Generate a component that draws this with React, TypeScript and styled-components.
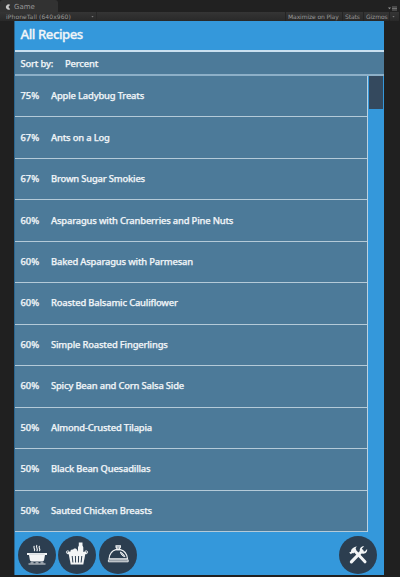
import React from "react";
import styled, { createGlobalStyle } from "styled-components";

const GlobalStyle = createGlobalStyle`
  * { box-sizing: border-box; }
  html, body { margin: 0; padding: 0; background: #202020; }
`;

const EditorWindow = styled.div`
  width: 400px;
  height: 577px;
  display: flex;
  flex-direction: column;
  overflow: hidden;
  background: #202020;
  font-family: "Noto Sans", "Open Sans", sans-serif;
`;

const TabStrip = styled.div`
  height: 12px;
  flex: none;
  display: flex;
  justify-content: space-between;
  align-items: flex-end;
  background: #212121;
`;

const Tab = styled.div`
  width: 58px;
  height: 12px;
  display: flex;
  align-items: center;
  gap: 3px;
  padding: 1px 0 0 5px;
  border-radius: 3px 3px 0 0;
  background: #323232;
  color: #969696;
  font: 7px/10px "DejaVu Sans", sans-serif;
`;

const PaneMenu = styled.svg`
  width: 10px;
  height: 5px;
  margin-right: 2px;
  margin-bottom: 1px;
`;

const Toolbar = styled.div`
  height: 9px;
  flex: none;
  display: flex;
  justify-content: space-between;
  margin-right: 1px;
  background: linear-gradient(#353535, #292929);
  color: #9a9a9a;
  font: 6px/8px "DejaVu Sans", sans-serif;
  white-space: nowrap;
`;

const AspectSelect = styled.div`
  width: 97px;
  display: flex;
  justify-content: space-between;
  align-items: center;
  padding: 0 2px 0 6px;
  border-right: 1px solid #282828;
  letter-spacing: 0.1px;
`;

const ToolbarActions = styled.div`
  display: flex;
`;

const ToolbarButton = styled.div<{ $width: number }>`
  width: ${(p) => p.$width}px;
  display: flex;
  align-items: center;
  padding-left: 2px;
  border-left: 1px solid #242424;
  letter-spacing: -0.1px;
`;

const Caret = styled.span`
  width: 3px;
  height: 2px;
  background: #7b7b7b;
  clip-path: polygon(0 0, 100% 0, 50% 100%);
`;

const GameView = styled.div`
  width: 370px;
  height: 554px;
  margin-left: 14px;
  flex: none;
  display: flex;
  flex-direction: column;
  border-left: 1px solid #2c668f;
  background: #3498db;
  color: #f1f5f8;
`;

const Header = styled.header`
  height: 31px;
  flex: none;
  padding: 3px 0 0 5.5px;
  border-bottom: 2px solid #c9e0f0;
  font-size: 13.2px;
  line-height: 20px;
  font-weight: 500;
  letter-spacing: -0.45px;
  -webkit-text-stroke: 0.3px #f1f5f8;
`;

const SortBar = styled.div`
  height: 24px;
  flex: none;
  display: flex;
  align-items: center;
  padding-left: 5.5px;
  border-bottom: 2px solid #8db0c8;
  background: #4c7a99;
  font-size: 9.4px;
  font-weight: 500;
  letter-spacing: -0.18px;
  -webkit-text-stroke: 0.25px #f1f5f8;
`;

const SortLabel = styled.span`
  width: 44.5px;
`;

const ListArea = styled.div`
  height: 456px;
  flex: none;
  display: flex;
`;

const RecipeList = styled.ul`
  width: 353px;
  margin: 0;
  padding: 0;
  display: grid;
  grid-auto-rows: 1fr;
  list-style: none;
  border-right: 1px solid #b9d2e3;
  background: #4c7a99;
`;

const RecipeRow = styled.li`
  display: flex;
  align-items: center;
  padding: 0 0 1px 5.5px;
  border-bottom: 1px solid #b4cad8;
  font-size: 9.4px;
  font-weight: 500;
  letter-spacing: -0.18px;
  white-space: nowrap;
  -webkit-text-stroke: 0.25px #f1f5f8;
`;

const Percent = styled.span`
  width: 30.5px;
  letter-spacing: 0;
`;

const ScrollTrack = styled.div`
  flex: 1;
  padding-left: 1px;
  padding-right: 1px;
`;

const ScrollThumb = styled.div`
  height: 33px;
  background: #34495e;
`;

const BottomBar = styled.nav`
  flex: 1;
  display: flex;
  align-items: center;
  gap: 2.3px;
  padding: 3px 7px 0 3px;
`;

const RoundButton = styled.button<{ $end?: boolean }>`
  width: 38px;
  height: 38px;
  flex: none;
  display: grid;
  place-items: center;
  margin-left: ${(p) => (p.$end ? "auto" : "0")};
  padding: 0;
  border: 0;
  border-radius: 50%;
  background: #2c3e50;
`;

const Glyph = styled.svg`
  width: 38px;
  height: 38px;
  display: block;
`;

const recipes: [string, string][] = [
  ["75%", "Apple Ladybug Treats"],
  ["67%", "Ants on a Log"],
  ["67%", "Brown Sugar Smokies"],
  ["60%", "Asparagus with Cranberries and Pine Nuts"],
  ["60%", "Baked Asparagus with Parmesan"],
  ["60%", "Roasted Balsamic Cauliflower"],
  ["60%", "Simple Roasted Fingerlings"],
  ["60%", "Spicy Bean and Corn Salsa Side"],
  ["50%", "Almond-Crusted Tilapia"],
  ["50%", "Black Bean Quesadillas"],
  ["50%", "Sauted Chicken Breasts"],
];

const PotIcon = () => (
  <Glyph viewBox="0 0 38 38" fill="none" stroke="#f2f4f5">
    <path d="M16.4 10c-2 1.8 1.7 2.9-.2 5.2M19 9c-2 2.2 1.7 3.4-.2 6.2M21.6 10c-2 1.8 1.7 2.9-.2 5.2" strokeWidth="1.1" />
    <path d="M9 17h20v2h-2l-.9 5c-.2.9-.8 1.4-1.6 1.4H13.5c-.8 0-1.4-.5-1.6-1.4L11 19H9z" fill="#f2f4f5" stroke="none" />
    <path d="M11.5 18.1h15" stroke="#a5b0b9" strokeWidth=".5" />
    <path d="M10.5 28h17" strokeWidth=".9" />
    <path d="M12.5 26.8h3M17.5 26.8h3M22.5 26.8h3" strokeWidth=".8" />
  </Glyph>
);

const BasketIcon = () => (
  <Glyph viewBox="0 0 38 38" fill="#f2f4f5">
    <path d="M20 16v-4.8l.8-1.7V6.6h3.7v2.9l.8 1.7V16z" />
    <path d="M12.3 16.3c-.3-2 1.2-3.2 2.7-2.6.6-1.5 3.2-1.7 4 0l1.3 2.6z" />
    <path d="M9.5 15.9h19v2.3h-19z" />
    <path d="M10.7 18h16.6l-2 10.5H12.7z" />
    <circle cx="9.8" cy="16.2" r="1.4" fill="none" stroke="#f2f4f5" strokeWidth=".9" />
    <circle cx="28.2" cy="16.2" r="1.4" fill="none" stroke="#f2f4f5" strokeWidth=".9" />
    <path d="M14.2 20l.7 6.5M17.4 20l.2 6.5M20.6 20l-.2 6.5M23.8 20l-.7 6.5" stroke="#2c3e50" strokeWidth="1" />
  </Glyph>
);

const ClocheIcon = () => (
  <Glyph viewBox="0 0 38 38" fill="none" stroke="#f2f4f5" strokeWidth="1.1">
    <path d="M17 9.7h4.4v1.5l-.8.8v1.8h-2.8V12l-.8-.8z" fill="#a9b2ba" />
    <path d="M10 22.8c.5-4.8 3.3-8.3 7-9.2h4.4c3.7.9 6.6 4.4 7.1 9.2z" />
    <path d="M21.3 16c2.3.9 3.7 2.5 4.6 4.7-2.2-.4-4-2-4.6-4.7z" fill="#a9b2ba" strokeWidth=".9" />
    <path d="M9.4 23.8h19.8v2H9.4z" fill="#78858f" strokeWidth=".9" />
  </Glyph>
);

const ToolsIcon = () => (
  <Glyph viewBox="0 0 38 38" fill="none" stroke="#f2f4f5">
    <path d="M15.2 14.2L26 25.8" strokeWidth="3" strokeLinecap="round" />
    <path d="M12.4 25.8L23 15" strokeWidth="3.2" strokeLinecap="round" />
    <path d="M10.2 16.4l1.7-.6.4-2c1.3-1.8 3.3-3.2 6-3.3-1.4.8-1.9 1.6-1.5 2.6l.5 1-3.1 3.4-1-.6-1.3 1.3z" fill="#f2f4f5" stroke="none" />
    <path d="M25.2 10.2c-3.4-.2-5.2 2.6-4.1 5.4l2 2c3.1.9 5.5-1.4 5-4.5l-2.3 2.4-2.3-.5-.6-2.4z" fill="#f2f4f5" stroke="none" />
  </Glyph>
);

export default function App() {
  return (
    <EditorWindow>
      <GlobalStyle />
      <TabStrip>
        <Tab>
          <svg width="6" height="6" viewBox="0 0 6 6">
            <path d="M5.2.8A2.7 2.7 0 1 0 5.2 5.2L3.4 3z" fill="#c7c7c7" />
          </svg>
          Game
        </Tab>
        <PaneMenu viewBox="0 0 10 5">
          <path d="M0 1.5h3L1.5 3.2z" fill="#999" />
          <path d="M4 1h5M4 2.5h5M4 4h5" stroke="#858585" strokeWidth=".8" />
        </PaneMenu>
      </TabStrip>
      <Toolbar>
        <AspectSelect>
          iPhoneTall (640x960)
          <Caret />
        </AspectSelect>
        <ToolbarActions>
          <ToolbarButton $width={57}>Maximize on Play</ToolbarButton>
          <ToolbarButton $width={21}>Stats</ToolbarButton>
          <ToolbarButton $width={26}>Gizmos</ToolbarButton>
          <ToolbarButton $width={10}>
            <Caret />
          </ToolbarButton>
        </ToolbarActions>
      </Toolbar>
      <GameView>
        <Header>All Recipes</Header>
        <SortBar>
          <SortLabel>Sort by:</SortLabel>
          <span>Percent</span>
        </SortBar>
        <ListArea>
          <RecipeList>
            {recipes.map(([percent, name]) => (
              <RecipeRow key={name}>
                <Percent>{percent}</Percent>
                <span>{name}</span>
              </RecipeRow>
            ))}
          </RecipeList>
          <ScrollTrack>
            <ScrollThumb />
          </ScrollTrack>
        </ListArea>
        <BottomBar>
          <RoundButton aria-label="Cook">
            <PotIcon />
          </RoundButton>
          <RoundButton aria-label="Groceries">
            <BasketIcon />
          </RoundButton>
          <RoundButton aria-label="Meals">
            <ClocheIcon />
          </RoundButton>
          <RoundButton aria-label="Settings" $end>
            <ToolsIcon />
          </RoundButton>
        </BottomBar>
      </GameView>
    </EditorWindow>
  );
}
